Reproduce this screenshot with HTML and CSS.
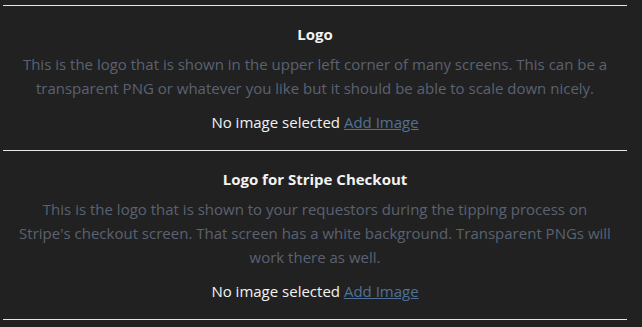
FILE: index.html
```html
<!doctype html>
<html>
<head>
<title>Settings</title>
<meta name="viewport" content="width=device-width">
<link rel="stylesheet" href="styles.css">
</head>
<body>
<div class=wrap>
<div class=item>
<h3>Logo</h3>
<p class=desc>This is the logo that is shown in the upper left corner of many screens. This can be a transparent PNG or whatever you like but it should be able to scale down nicely.</p>
<p class=pick>No image selected <a href="#">Add Image</a></p>
</div>
<div class=item>
<h3>Logo for Stripe Checkout</h3>
<p class=desc>This is the logo that is shown to your requestors during the tipping process on Stripe's checkout screen. That screen has a white background. Transparent PNGs will work there as well.</p>
<p class=pick>No image selected <a href="#">Add Image</a></p>
</div>
</div>
</body>
</html>
```

FILE: styles.css
```css
html, body, h3, p {margin:0; padding:0}
body {background:#212121; color:#f2f2f2; font:15px "Open Sans", "Noto Sans", Arial, sans-serif}
.wrap {width:624px; margin-left:3px; padding-top:5px}
.item {border-top:1px solid #e6e6e6; text-align:center; padding:18px 14px 16px}
.item:last-child {border-bottom:1px solid #e6e6e6}
h3 {font-size:15px; font-weight:bold; line-height:20px}
.desc {color:#5b6172; line-height:24px; margin-top:8px}
.pick {margin-top:10px; line-height:24px}
a {color:#4f7197}
```
